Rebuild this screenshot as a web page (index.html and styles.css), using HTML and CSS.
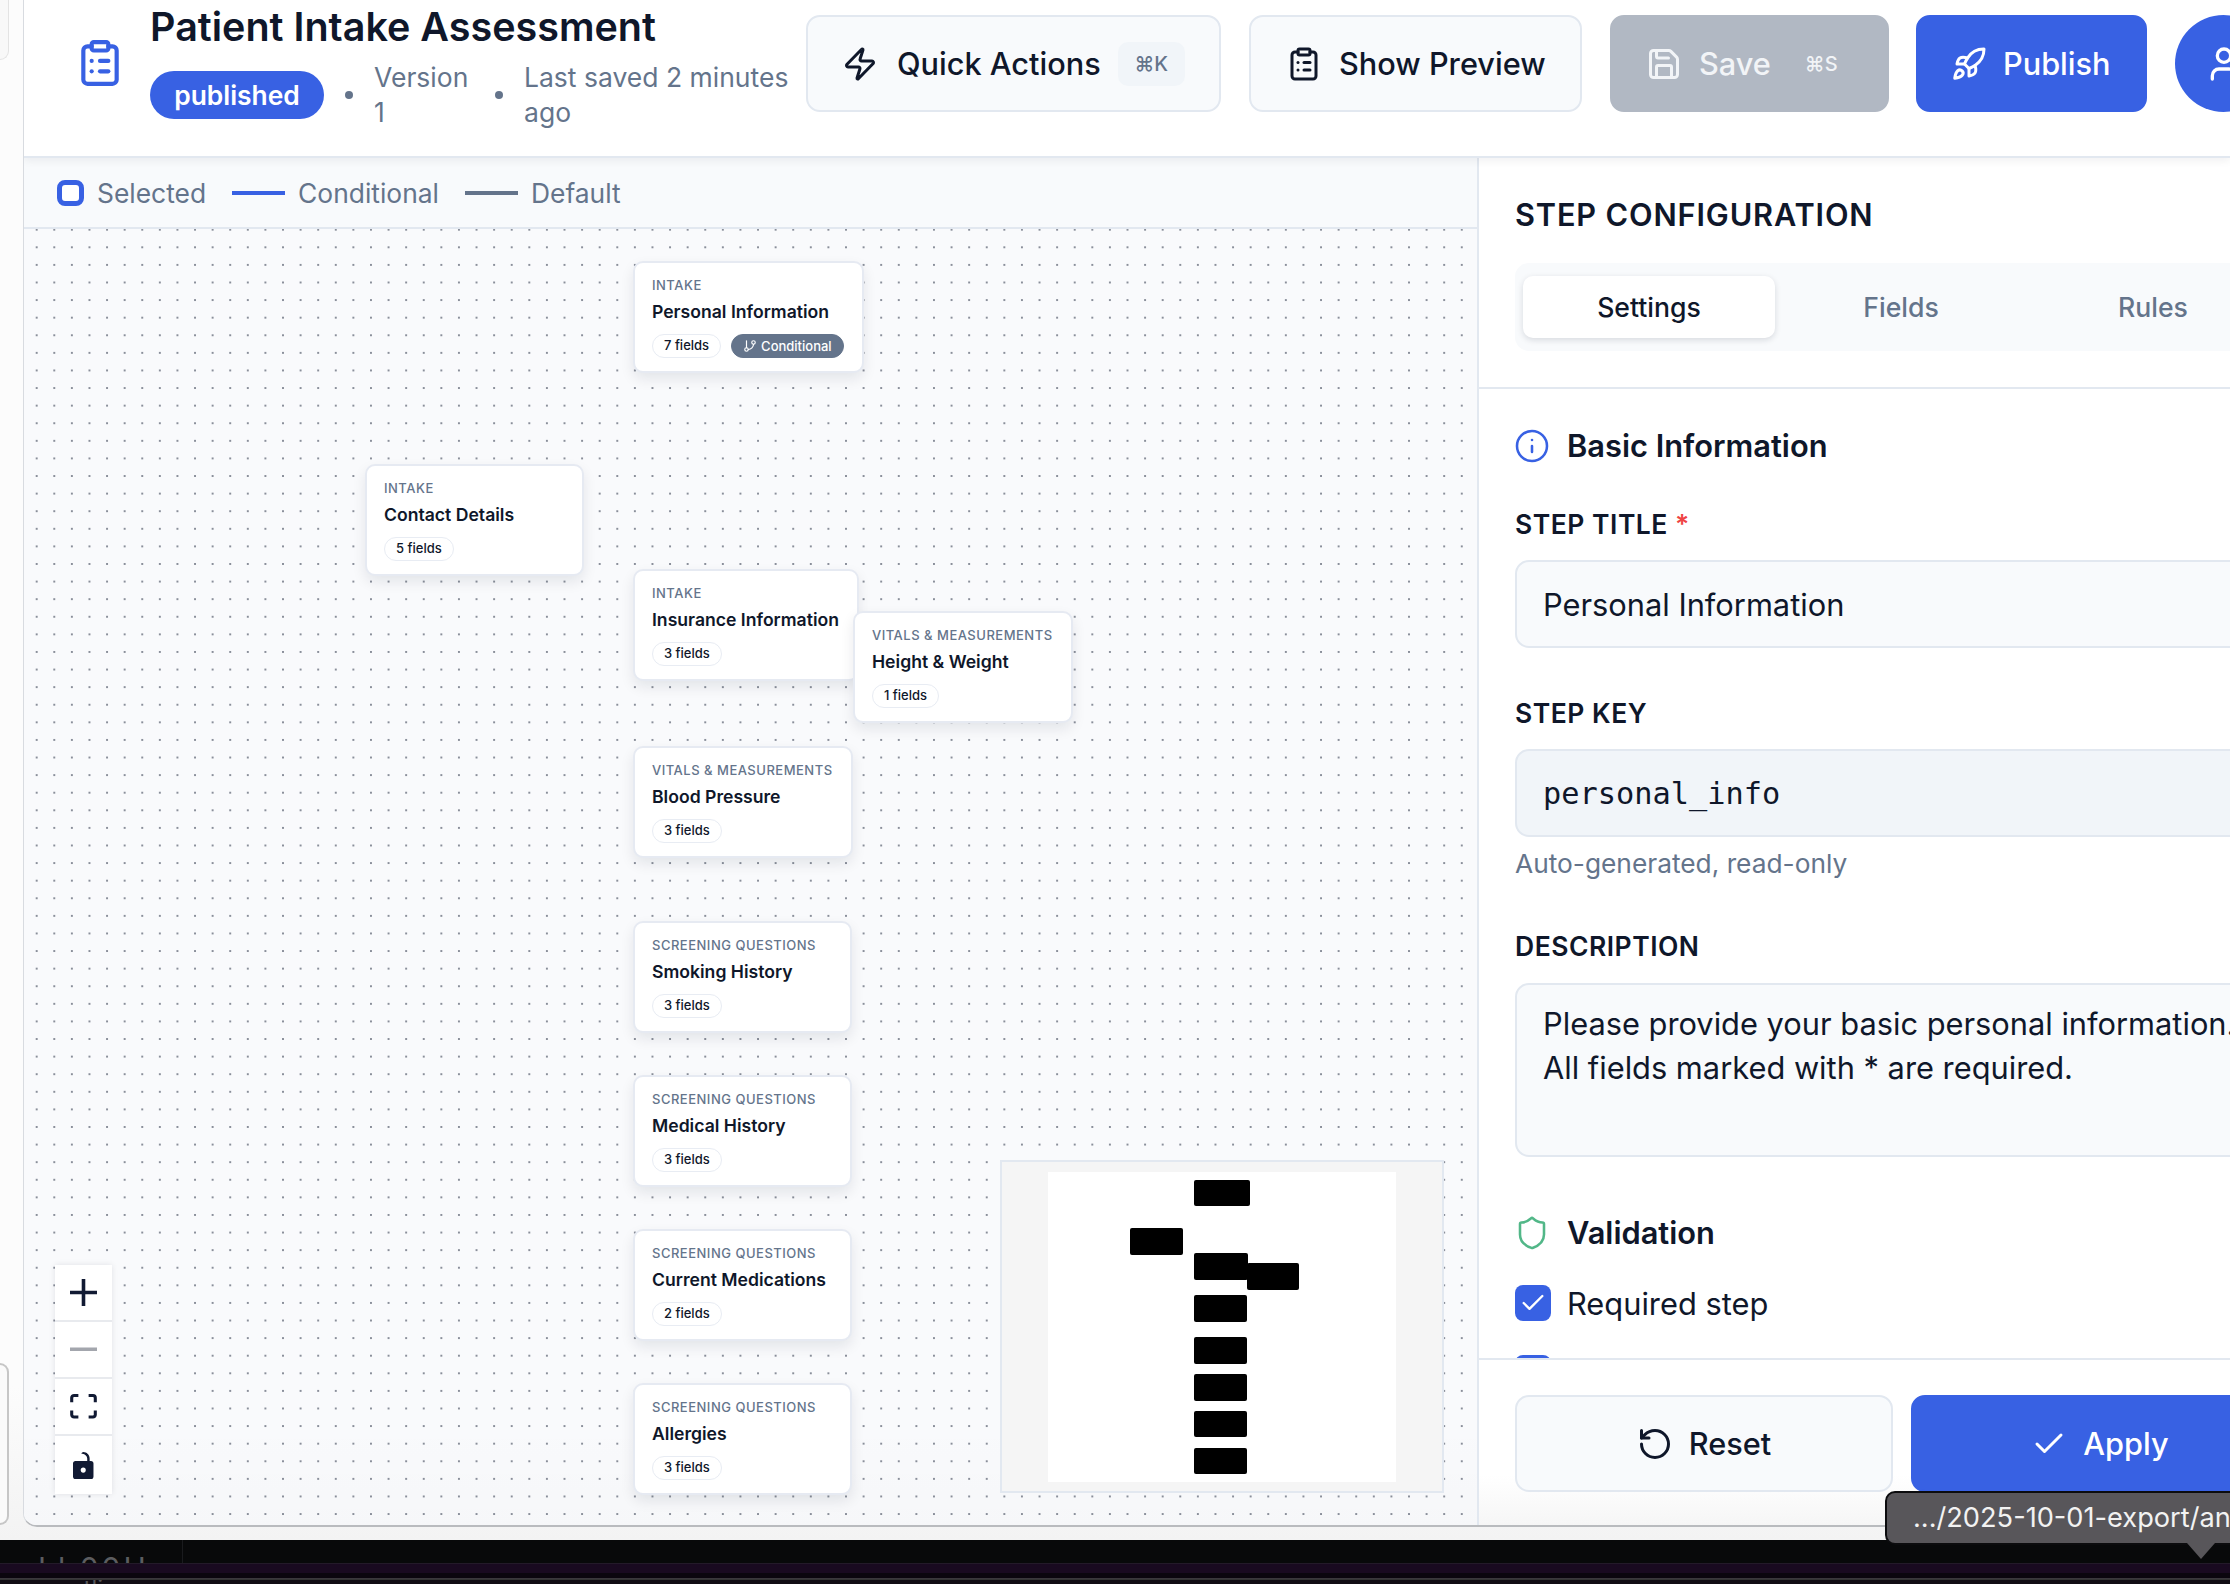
FILE: index.html
```html
<!DOCTYPE html>
<html lang="en">
<head>
<meta charset="utf-8">
<title>Patient Intake Assessment</title>
<link rel="stylesheet" href="styles.css">
</head>
<body>
<svg class="defs" width="0" height="0" aria-hidden="true">
  <symbol id="i-clipboard" viewBox="0 0 24 24"><rect x="8" y="2" width="8" height="4" rx="1"/><path d="M16 4h2a2 2 0 0 1 2 2v14a2 2 0 0 1-2 2H6a2 2 0 0 1-2-2V6a2 2 0 0 1 2-2h2"/><path d="M12 11h4"/><path d="M12 16h4"/><path d="M8 11h.01"/><path d="M8 16h.01"/></symbol>
  <symbol id="i-zap" viewBox="0 0 24 24"><path d="M4 14a1 1 0 0 1-.78-1.63l9.9-10.2a.5.5 0 0 1 .86.46l-1.92 6.02A1 1 0 0 0 13 10h7a1 1 0 0 1 .78 1.63l-9.9 10.2a.5.5 0 0 1-.86-.46l1.92-6.02A1 1 0 0 0 11 14z"/></symbol>
  <symbol id="i-save" viewBox="0 0 24 24"><path d="M15.2 3a2 2 0 0 1 1.4.6l3.8 3.8a2 2 0 0 1 .6 1.4V19a2 2 0 0 1-2 2H5a2 2 0 0 1-2-2V5a2 2 0 0 1 2-2z"/><path d="M17 21v-7a1 1 0 0 0-1-1H8a1 1 0 0 0-1 1v7"/><path d="M7 3v4a1 1 0 0 0 1 1h7"/></symbol>
  <symbol id="i-rocket" viewBox="0 0 24 24"><path d="M4.5 16.5c-1.5 1.26-2 5-2 5s3.74-.5 5-2c.71-.84.7-2.13-.09-2.91a2.18 2.18 0 0 0-2.91-.09z"/><path d="m12 15-3-3a22 22 0 0 1 2-3.95A12.88 12.88 0 0 1 22 2c0 2.72-.78 7.5-6 11a22.35 22.35 0 0 1-4 2z"/><path d="M9 12H4s.55-3.03 2-4c1.62-1.08 5 0 5 0"/><path d="M12 15v5s3.03-.55 4-2c1.08-1.62 0-5 0-5"/></symbol>
  <symbol id="i-user" viewBox="0 0 24 24"><path d="M19 21v-2a4 4 0 0 0-4-4H9a4 4 0 0 0-4 4v2"/><circle cx="12" cy="7" r="4"/></symbol>
  <symbol id="i-info" viewBox="0 0 24 24"><circle cx="12" cy="12" r="10"/><path d="M12 16v-4"/><path d="M12 8h.01"/></symbol>
  <symbol id="i-shield" viewBox="0 0 24 24"><path d="M20 13c0 5-3.5 7.5-7.66 8.95a1 1 0 0 1-.67-.01C7.5 20.5 4 18 4 13V6a1 1 0 0 1 1-1c2 0 4.5-1.2 6.24-2.72a1.17 1.17 0 0 1 1.52 0C14.51 3.81 17 5 19 5a1 1 0 0 1 1 1z"/></symbol>
  <symbol id="i-reset" viewBox="0 0 24 24"><path d="M3 12a9 9 0 1 0 9-9 9.75 9.75 0 0 0-6.74 2.74L3 8"/><path d="M3 3v5h5"/></symbol>
  <symbol id="i-check" viewBox="0 0 24 24"><path d="M20 6 9 17l-5-5"/></symbol>
  <symbol id="i-branch" viewBox="0 0 24 24"><path d="M6 3v12"/><circle cx="18" cy="6" r="3"/><circle cx="6" cy="18" r="3"/><path d="M18 9a9 9 0 0 1-9 9"/></symbol>
</svg>

<div class="desktop">
  <div class="sliver">
    <div class="sliver-top"></div>
    <div class="sliver-bottom"></div>
  </div>
  <div class="window">
    <header class="topbar">
      <svg class="ico ico-logo"><use href="#i-clipboard"/></svg>
      <div class="title-block">
        <h1 class="page-title">Patient Intake Assessment</h1>
        <div class="meta">
          <span class="pill">published</span>
          <span class="dot"></span>
          <span class="meta-text meta-version">Version 1</span>
          <span class="dot"></span>
          <span class="meta-text meta-saved">Last saved 2 minutes ago</span>
        </div>
      </div>
      <div class="actions">
        <button class="btn btn-quick"><svg class="ico ico-btn"><use href="#i-zap"/></svg><span>Quick Actions</span><kbd class="kbd">⌘K</kbd></button>
        <button class="btn btn-preview"><svg class="ico ico-btn"><use href="#i-clipboard"/></svg><span>Show Preview</span></button>
        <button class="btn btn-save"><svg class="ico ico-btn"><use href="#i-save"/></svg><span>Save</span><kbd class="kbd-plain">⌘S</kbd></button>
        <button class="btn btn-publish"><svg class="ico ico-btn"><use href="#i-rocket"/></svg><span>Publish</span></button>
        <div class="avatar"><svg class="ico ico-avatar"><use href="#i-user"/></svg></div>
      </div>
    </header>

    <div class="workspace">
      <section class="editor">
        <div class="legend">
          <span class="legend-item"><i class="swatch-box"></i>Selected</span>
          <span class="legend-item"><i class="swatch-line swatch-blue"></i>Conditional</span>
          <span class="legend-item"><i class="swatch-line swatch-gray"></i>Default</span>
        </div>
        <div class="canvas">
          <article class="node" style="left:609px;top:32px">
            <div class="node-cat">INTAKE</div>
            <div class="node-title">Personal Information</div>
            <div class="node-badges"><span class="badge">7 fields</span><span class="badge badge-cond"><svg class="ico ico-branch"><use href="#i-branch"/></svg>Conditional</span></div>
          </article>
          <article class="node" style="left:341px;top:235px">
            <div class="node-cat">INTAKE</div>
            <div class="node-title">Contact Details</div>
            <div class="node-badges"><span class="badge">5 fields</span></div>
          </article>
          <article class="node" style="left:609px;top:340px">
            <div class="node-cat">INTAKE</div>
            <div class="node-title">Insurance Information</div>
            <div class="node-badges"><span class="badge">3 fields</span></div>
          </article>
          <article class="node" style="left:829px;top:382px">
            <div class="node-cat">VITALS &amp; MEASUREMENTS</div>
            <div class="node-title">Height &amp; Weight</div>
            <div class="node-badges"><span class="badge">1 fields</span></div>
          </article>
          <article class="node" style="left:609px;top:517px">
            <div class="node-cat">VITALS &amp; MEASUREMENTS</div>
            <div class="node-title">Blood Pressure</div>
            <div class="node-badges"><span class="badge">3 fields</span></div>
          </article>
          <article class="node" style="left:609px;top:692px">
            <div class="node-cat">SCREENING QUESTIONS</div>
            <div class="node-title">Smoking History</div>
            <div class="node-badges"><span class="badge">3 fields</span></div>
          </article>
          <article class="node" style="left:609px;top:846px">
            <div class="node-cat">SCREENING QUESTIONS</div>
            <div class="node-title">Medical History</div>
            <div class="node-badges"><span class="badge">3 fields</span></div>
          </article>
          <article class="node" style="left:609px;top:1000px">
            <div class="node-cat">SCREENING QUESTIONS</div>
            <div class="node-title">Current Medications</div>
            <div class="node-badges"><span class="badge">2 fields</span></div>
          </article>
          <article class="node" style="left:609px;top:1154px">
            <div class="node-cat">SCREENING QUESTIONS</div>
            <div class="node-title">Allergies</div>
            <div class="node-badges"><span class="badge">3 fields</span></div>
          </article>

          <div class="controls">
            <button class="ctrl"><svg class="ctrl-plus" viewBox="0 0 32 32"><path d="M32 18.133H18.133V32h-4.266V18.133H0v-4.266h13.867V0h4.266v13.867H32z"/></svg></button>
            <button class="ctrl"><svg class="ctrl-minus" viewBox="0 0 32 5"><path d="M0 0h32v4.2H0z"/></svg></button>
            <button class="ctrl"><svg class="ctrl-fit" viewBox="0 0 32 30"><path d="M3.692 4.63c0-.53.4-.938.939-.938h5.215V0H4.708C2.13 0 0 2.054 0 4.63v5.216h3.692V4.631zM27.354 0h-5.2v3.692h5.17c.53 0 .984.4.984.939v5.215H32V4.631A4.624 4.624 0 0027.354 0zm.954 24.83c0 .532-.4.94-.939.94h-5.215v3.768h5.215c2.577 0 4.631-2.13 4.631-4.707v-5.139h-3.692v5.139zm-23.677.94c-.531 0-.939-.4-.939-.94v-5.138H0v5.139c0 2.577 2.13 4.707 4.708 4.707h5.138V25.77H4.631z"/></svg></button>
            <button class="ctrl ctrl-last"><svg class="ctrl-lock" viewBox="0 0 25 32"><path d="M21.333 10.667H19.81V7.619C19.81 3.429 16.38 0 12.19 0c-4.114 1.828-1.37 2.133.305 2.438 1.676.305 4.42 2.59 4.42 5.181v3.048H3.047A3.056 3.056 0 000 13.714v15.238A3.056 3.056 0 003.048 32h18.285a3.056 3.056 0 003.048-3.048V13.714a3.056 3.056 0 00-3.048-3.047zM12.19 24.533a3.056 3.056 0 01-3.047-3.047 3.056 3.056 0 013.047-3.048 3.056 3.056 0 013.048 3.048 3.056 3.056 0 01-3.048 3.047z"/></svg></button>
          </div>

          <div class="minimap">
            <div class="minimap-view">
              <i class="mm" style="left:146px;top:8px;width:56px;height:26px"></i>
              <i class="mm" style="left:82px;top:56px;width:53px;height:27px"></i>
              <i class="mm" style="left:146px;top:81px;width:54px;height:27px"></i>
              <i class="mm" style="left:199px;top:91px;width:52px;height:27px"></i>
              <i class="mm" style="left:146px;top:123px;width:53px;height:27px"></i>
              <i class="mm" style="left:146px;top:165px;width:53px;height:27px"></i>
              <i class="mm" style="left:146px;top:202px;width:53px;height:27px"></i>
              <i class="mm" style="left:146px;top:239px;width:53px;height:26px"></i>
              <i class="mm" style="left:146px;top:276px;width:53px;height:26px"></i>
            </div>
          </div>
        </div>
      </section>

      <aside class="panel">
        <div class="panel-head">
          <h2 class="panel-title">STEP CONFIGURATION</h2>
          <div class="tabs">
            <span class="tab tab-active">Settings</span>
            <span class="tab">Fields</span>
            <span class="tab">Rules</span>
          </div>
        </div>
        <div class="panel-body">
          <div class="section-head"><svg class="ico ico-section ico-blue"><use href="#i-info"/></svg><h3>Basic Information</h3></div>
          <label class="field-label field-first">STEP TITLE <span class="req">*</span></label>
          <div class="input">Personal Information</div>
          <label class="field-label">STEP KEY</label>
          <div class="input input-ro">personal_info</div>
          <div class="hint">Auto-generated, read-only</div>
          <label class="field-label field-desc">DESCRIPTION</label>
          <div class="input textarea">Please provide your basic personal information.<br>All fields marked with * are required.</div>
          <div class="section-head section-val"><svg class="ico ico-section ico-green"><use href="#i-shield"/></svg><h3>Validation</h3></div>
          <div class="check-row"><span class="checkbox"><svg class="ico ico-tick"><use href="#i-check"/></svg></span><span>Required step</span></div>
          <div class="check-row check-next"><span class="checkbox"></span></div>
        </div>
        <div class="panel-foot">
          <button class="btn btn-reset"><svg class="ico ico-btn"><use href="#i-reset"/></svg><span>Reset</span></button>
          <button class="btn btn-apply"><svg class="ico ico-btn"><use href="#i-check"/></svg><span>Apply</span></button>
        </div>
      </aside>
    </div>
  </div>
</div>

<div class="taskbar">
  <div class="task-row1"><span class="task-clip">Ll 00H</span></div>
  <div class="task-row2"></div>
  <div class="task-row3"></div>
  <div class="task-row4"><span>outline</span></div>
</div>

<div class="tooltip">.../2025-10-01-export/an<i class="tooltip-arrow"></i></div>
</body>
</html>
```

FILE: styles.css
```css
* { box-sizing: border-box; }
html, body { margin: 0; height: 100%; }
body {
  width: 2230px;
  height: 1584px;
  overflow: hidden;
  position: relative;
  background: #f3f3f3;
  font-family: "Inter", "Liberation Sans", "DejaVu Sans", sans-serif;
  color: #111827;
}
h1, h2, h3 { margin: 0; }
button { font: inherit; color: inherit; margin: 0; }
.defs { position: absolute; }
.ico { fill: none; stroke: currentColor; stroke-width: 2; stroke-linecap: round; stroke-linejoin: round; flex: none; }

.desktop { display: flex; height: 1540px; background: linear-gradient(#fcfcfc 90%, #f3f3f3); }
.sliver { width: 23px; flex: none; display: flex; flex-direction: column; justify-content: space-between; padding-bottom: 15px; }
.sliver-top { width: 9px; height: 60px; border: solid #e3e3e3; border-width: 0 1px 1px 0; border-bottom-right-radius: 10px; background: #f8f8f8; }
.sliver-bottom { width: 9px; height: 162px; border: solid #c6c6c6; border-width: 2px 2px 2px 0; border-radius: 0 16px 16px 0; background: #fafafa; }

.window {
  width: 2207px;
  height: 1527px;
  flex: none;
  display: flex;
  flex-direction: column;
  border-left: 1px solid #d8dbe0;
  border-bottom: 2px solid #b9bbbe;
  border-bottom-left-radius: 14px;
  overflow: hidden;
  background: #fff;
}

/* top bar */
.topbar {
  height: 158px;
  flex: none;
  display: flex;
  align-items: flex-start;
  padding-left: 51px;
  border-bottom: 2px solid #e2e8f0;
  box-shadow: 0 3px 8px rgba(15, 23, 42, .06);
  background: #fff;
  position: relative;
  z-index: 2;
}
.ico-logo { width: 50px; height: 50px; color: #3861e3; margin-top: 38px; }
.title-block { width: 656px; flex: none; margin-left: 25px; }
.page-title { font-size: 39.5px; line-height: 54px; font-weight: 600; color: #0f172a; height: 54px; }
.meta { display: flex; align-items: center; gap: 21px; margin-top: 6px; }
.pill { background: #3861e3; color: #fff; font-size: 26.4px; font-weight: 600; line-height: 48px; height: 48px; width: 174px; text-align: center; border-radius: 24px; flex: none; }
.dot { width: 8px; height: 8px; border-radius: 50%; background: #64748b; flex: none; }
.meta-text { color: #64748b; font-size: 26.5px; line-height: 35px; flex: none; }
.meta-version { width: 100px; }
.meta-saved { width: 270px; }

.actions { display: flex; gap: 28px; margin-top: 15px; flex: none; }
.btn {
  height: 97px;
  display: flex;
  align-items: center;
  border-radius: 14px;
  font-size: 30.7px;
  font-weight: 500;
  border: 2px solid #e2e8f0;
  background: #f8fafc;
  color: #0f172a;
  padding: 0;
  flex: none;
}
.ico-btn { width: 36px; height: 36px; }
.btn-quick { width: 415px; padding-left: 34px; gap: 19px; }
.kbd { margin-left: -2px; width: 67px; height: 44px; border-radius: 10px; background: #f1f5f9; color: #64748b; font: 500 20px/44px "Inter", "DejaVu Sans", sans-serif; text-align: center; }
.btn-preview { width: 333px; padding-left: 35px; gap: 17px; }
.btn-save { width: 279px; padding-left: 34px; gap: 17px; background: #b1b8c3; border-color: #b1b8c3; color: #f2f4f7; }
.kbd-plain { margin-left: 17px; font: 500 20px/1 "Inter", "DejaVu Sans", sans-serif; }
.btn-publish { width: 231px; margin-left: -1px; padding-left: 33px; gap: 16px; background: #3861e3; border-color: #3861e3; color: #fff; }
.avatar { width: 97px; height: 97px; border-radius: 50%; background: #3861e3; color: #fff; display: flex; align-items: center; justify-content: center; flex: none; }
.ico-avatar { width: 40px; height: 40px; }

/* workspace */
.workspace { flex: 1; display: flex; min-height: 0; }
.editor { width: 1455px; flex: none; display: flex; flex-direction: column; border-right: 2px solid #e2e8f0; }
.legend {
  height: 71px;
  flex: none;
  display: flex;
  align-items: center;
  gap: 26px;
  padding-left: 33px;
  background: #f8fafc;
  color: #64748b;
  font-size: 26.4px;
  border-bottom: 2px solid #e2e8f0;
}
.legend-item { display: flex; align-items: center; gap: 13px; }
.swatch-box { width: 27px; height: 26px; border: 5px solid #3861e3; border-radius: 8px; background: #fff; }
.swatch-line { width: 53px; height: 4px; }
.swatch-blue { background: #3861e3; }
.swatch-gray { background: #64748b; }

.canvas {
  flex: 1;
  position: relative;
  background-color: #f9fafc;
  background-image:
    radial-gradient(circle at center, #747a87 0, #747a87 .6px, transparent 1.15px),
    linear-gradient(transparent 92%, rgba(0, 0, 0, .012));
  background-size: 17.6px 17.6px, 100% 100%;
  background-position: 3.9px -8.1px, 0 0;
}

.node {
  position: absolute;
  min-width: 219px;
  height: 112px;
  padding: 13px 18px 0 17px;
  background: #fff;
  border: 2px solid #e6eaf2;
  border-radius: 10px;
  box-shadow: 0 6px 14px rgba(15, 23, 42, .09);
  white-space: nowrap;
}
.node-cat { font-size: 13px; line-height: 18px; font-weight: 500; color: #64748b; letter-spacing: .5px; }
.node-title { font-size: 17.6px; line-height: 24px; font-weight: 600; color: #0f172a; margin-top: 6px; }
.node-badges { display: flex; gap: 10px; margin-top: 10px; }
.badge { height: 24px; line-height: 21px; padding: 0 11px; border: 1.5px solid #e8ecf3; border-radius: 12px; font-size: 13px; font-weight: 500; color: #0f172a; background: #fff; }
.badge-cond { display: flex; align-items: center; gap: 4px; background: #64748b; border-color: #64748b; color: #fff; }
.ico-branch { width: 14px; height: 14px; }

.controls { position: absolute; left: 31px; top: 1036px; width: 57px; box-shadow: 0 0 6px rgba(15, 23, 42, .1); background: #e8eaee; display: flex; flex-direction: column; gap: 2px; }
.ctrl { height: 55px; border: 0; background: #fff; padding: 0; display: flex; align-items: center; justify-content: center; }
.ctrl-last { height: 58px; }
.ctrl svg { fill: #111a33; display: block; }
.ctrl-plus { width: 27px; height: 27px; }
.ctrl svg.ctrl-minus { width: 27px; height: 5px; fill: #a3a6ad; }
.ctrl-fit { width: 27px; height: 25px; }
.ctrl-lock { width: 21px; height: 27px; }

.minimap { position: absolute; left: 976px; top: 931px; width: 444px; height: 333px; border: 2px solid #e2e8f0; background: #f5f5f5; padding: 10px 46px; }
.minimap-view { position: relative; width: 348px; height: 310px; background: #fff; }
.mm { position: absolute; background: #000; border-radius: 2px; }

/* panel */
.panel { width: 848px; flex: none; display: flex; flex-direction: column; background: #fff; min-height: 0; }
.panel-head { height: 231px; flex: none; padding: 39px 0 0 36px; border-bottom: 2px solid #e2e8f0; }
.panel-title { font-size: 30.7px; line-height: 36px; font-weight: 600; letter-spacing: .85px; color: #0f172a; }
.tabs { display: flex; width: 772px; height: 88px; margin-top: 30px; padding: 13px 8px; background: #f8fafc; border-radius: 14px; }
.tab { width: 252px; flex: none; height: 62px; line-height: 62px; text-align: center; font-size: 26.6px; font-weight: 500; color: #64748b; border-radius: 10px; }
.tab-active { background: #fff; color: #0f172a; box-shadow: 0 2px 6px rgba(15, 23, 42, .14); }

.panel-body { flex: 1; min-height: 0; overflow: hidden; padding: 37px 0 0 36px; }
.section-head { display: flex; align-items: center; gap: 20px; height: 40px; }
.section-head h3 { font-size: 30.8px; line-height: 40px; font-weight: 600; color: #0f172a; }
.ico-section { width: 36px; height: 36px; margin-left: -1px; margin-right: -3px; }
.ico-blue { color: #3861e3; stroke-width: 1.7; }
.ico-green { color: #52b788; stroke-width: 1.7; }
.field-label { display: block; font-size: 26.5px; line-height: 34px; font-weight: 600; letter-spacing: .5px; color: #0f172a; margin: 48px 0 19px; }
.field-first { margin-top: 41px; }
.field-desc { margin: 47px 0 20px; }
.req { color: #ef4444; }
.input { width: 811px; height: 88px; padding: 0 26px; border: 2px solid #e2e8f0; border-radius: 14px; background: #f8fafc; font-size: 30.8px; line-height: 86px; color: #0f172a; }
.input-ro { background: #f1f5f9; font-family: "DejaVu Sans Mono", "Liberation Mono", monospace; font-size: 30.3px; }
.hint { margin-top: 9px; font-size: 26.3px; line-height: 36px; color: #64748b; }
.textarea { height: 174px; line-height: 43.5px; padding-top: 17px; }
.section-val { margin-top: 56px; }
.check-row { display: flex; align-items: center; gap: 16px; height: 36px; margin-top: 32px; font-size: 30.8px; color: #0f172a; }
.check-next { margin-top: 34px; }
.checkbox { width: 36px; height: 36px; background: #3861e3; border-radius: 8px; color: #fff; display: flex; align-items: center; justify-content: center; flex: none; }
.ico-tick { width: 28px; height: 28px; }

.panel-foot { height: 167px; flex: none; display: flex; gap: 18px; padding: 35px 0 0 36px; border-top: 2px solid #e2e8f0; background: linear-gradient(#fff 70%, #f6f6f6); }
.btn-reset, .btn-apply { width: 378px; justify-content: center; gap: 16px; }
.btn-apply { background: #3861e3; border-color: #3861e3; color: #fff; }

/* taskbar */
.taskbar { height: 44px; background: #08090a; overflow: hidden; }
.task-row1 { height: 23px; overflow: hidden; width: 183px; border-right: 1px solid #1a1b1e; padding-left: 38px; }
.task-clip { display: block; font-size: 30px; line-height: 30px; margin-top: 13px; color: #5c5d60; letter-spacing: 3px; }
.task-row2 { height: 10px; background: #190a20; border-top: 1px solid #231a29; }
.task-row3 { height: 5px; background: #0b060e; border-bottom: 1px solid #3a373c; box-sizing: content-box; }
.task-row4 { height: 6px; overflow: hidden; padding-left: 55px; background: #110d14; border-top: 1px solid #333; }
.task-row4 span { display: block; font-size: 24px; line-height: 24px; margin-top: -3px; color: #55565a; }

/* tooltip */
.tooltip {
  position: absolute;
  left: 1885px;
  top: 1491px;
  width: 360px;
  height: 54px;
  padding-left: 26px;
  background: #58565a;
  border: 2px solid #0c0c0e;
  border-radius: 10px;
  color: #f2f2f2;
  font-size: 27.2px;
  line-height: 50px;
  white-space: nowrap;
}
.tooltip-arrow {
  position: absolute;
  left: 300px;
  top: 50px;
  width: 0;
  height: 0;
  border-left: 14px solid transparent;
  border-right: 14px solid transparent;
  border-top: 16px solid #58565a;
}
```
